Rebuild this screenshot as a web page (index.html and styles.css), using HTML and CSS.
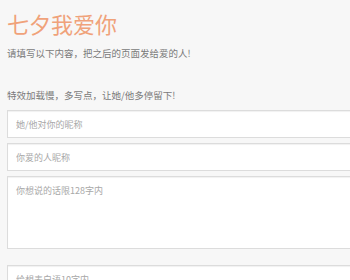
FILE: index.html
```html
<!DOCTYPE html>
<html lang="zh-CN">
<head>
    <meta charset="UTF-8">
    <meta name="viewport" content="width=device-width, initial-scale=1.0">
    <title>七夕我爱你</title>
    <link rel="stylesheet" href="styles.css">
</head>
<body>
    <div class="page">
        <h1 class="title">七夕我爱你</h1>
        <p class="tip">请填写以下内容，把之后的页面发给爱的人!</p>
        <p class="tip tip-slow">特效加载慢，多写点，让她/他多停留下!</p>

        <form class="love-form">
            <input type="text" class="field" placeholder="她/他对你的昵称">
            <input type="text" class="field" placeholder="你爱的人昵称">
            <textarea class="field field-area" placeholder="你想说的话限128字内"></textarea>
            <input type="text" class="field field-last" placeholder="给想表白语10字内">
        </form>
    </div>
</body>
</html>
```

FILE: styles.css
```css
html, body {
    overflow: hidden;
}
body {
    margin: 0;
    background-color: #f7f7f7;
    color: #777777;
    font-family: "Noto Sans CJK SC", "Liberation Sans", sans-serif;
}
.page {
    padding: 10px 0 0 7px;
}
.title {
    margin: 0;
    font-size: 22px;
    line-height: 26px;
    font-weight: normal;
    color: #f0a27a;
}
.tip {
    margin: 10px 0 0;
    font-size: 9.5px;
    line-height: 14px;
    color: #7a7a7a;
}
.tip-slow {
    margin-top: 28px;
}
.love-form {
    margin-top: 8px;
    width: 360px;
}
.field {
    display: block;
    box-sizing: border-box;
    width: 100%;
    height: 28px;
    margin: 0 0 5px;
    padding: 0 8px;
    background-color: #ffffff;
    border: 1px solid #dcdcdc;
    border-radius: 0;
    box-shadow: inset 0 1px 1px rgba(0, 0, 0, 0.06);
    font-family: "Noto Sans CJK SC", "Liberation Sans", sans-serif;
    font-size: 9px;
    color: #555555;
    outline: none;
}
.field::placeholder {
    color: #a8a8a8;
}
.field-area {
    height: 73px;
    padding-top: 7px;
    margin-bottom: 16px;
    resize: none;
}
```
